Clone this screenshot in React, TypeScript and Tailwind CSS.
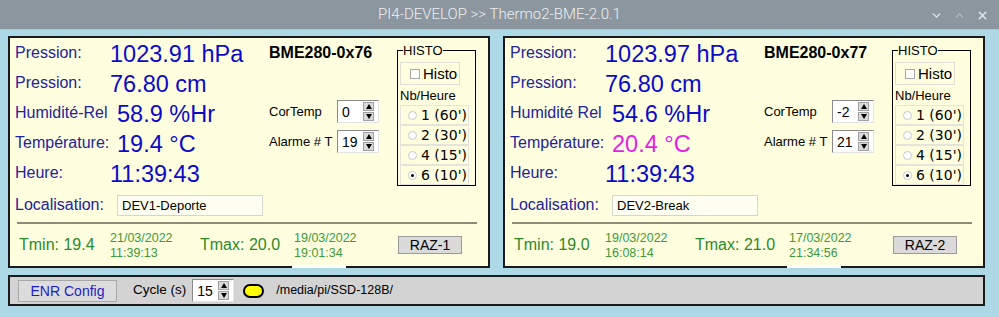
import { ChevronDown, ChevronUp, X } from "lucide-react"

type Sensor = {
  name: string
  press: string
  cm: string
  humLabel: string
  hum: string
  temp: string
  tempHot: boolean
  heure: string
  loc: string
  corTemp: string
  alarme: string
  tmin: string
  tminDate: [string, string]
  tmax: string
  tmaxDate: [string, string]
  raz: string
}

const sensors: Sensor[] = [
  {
    name: "BME280-0x76",
    press: "1023.91 hPa",
    cm: "76.80 cm",
    humLabel: "Humidité-Rel",
    hum: "58.9 %Hr",
    temp: "19.4 °C",
    tempHot: false,
    heure: "11:39:43",
    loc: "DEV1-Deporte",
    corTemp: "0",
    alarme: "19",
    tmin: "19.4",
    tminDate: ["21/03/2022", "11:39:13"],
    tmax: "20.0",
    tmaxDate: ["19/03/2022", "19:01:34"],
    raz: "RAZ-1",
  },
  {
    name: "BME280-0x77",
    press: "1023.97 hPa",
    cm: "76.80 cm",
    humLabel: "Humidité Rel",
    hum: "54.6 %Hr",
    temp: "20.4 °C",
    tempHot: true,
    heure: "11:39:43",
    loc: "DEV2-Break",
    corTemp: "-2",
    alarme: "21",
    tmin: "19.0",
    tminDate: ["19/03/2022", "16:08:14"],
    tmax: "21.0",
    tmaxDate: ["17/03/2022", "21:34:56"],
    raz: "RAZ-2",
  },
]

function Spin({ value }: { value: string }) {
  return (
    <div className="flex h-[23px] w-[42px] items-center border border-t-[#8a8a8a] border-l-[#8a8a8a] border-b-[#e4e4e4] border-r-[#e4e4e4] bg-white pl-[4px]">
      <span className="flex-1 text-[14px] leading-none text-black">{value}</span>
      <div className="mr-[4px] flex h-[19px] w-[11px] flex-col gap-px">
        <div className="flex flex-1 items-center justify-center border border-[#a0a0a0] bg-[#d9d9d9]">
          <div className="h-0 w-0 border-x-[3.5px] border-b-[5px] border-x-transparent border-b-black" />
        </div>
        <div className="flex flex-1 items-center justify-center border border-[#a0a0a0] bg-[#d9d9d9]">
          <div className="h-0 w-0 border-x-[3.5px] border-t-[5px] border-x-transparent border-t-black" />
        </div>
      </div>
    </div>
  )
}

function Row({ label, wide, value, color }: { label: string; wide?: boolean; value: string; color?: string }) {
  return (
    <div className="flex h-[30px] items-center whitespace-nowrap">
      <span className={`${wide ? "w-[102px]" : "w-[95px]"} text-[16px] text-[#22229a]`}>{label}</span>
      <span className={`pt-[3px] text-[23.5px] leading-none ${color ?? "text-[#0a0ac8]"}`}>{value}</span>
    </div>
  )
}

function Panel({ s }: { s: Sensor }) {
  return (
    <div className="relative h-[232px] w-[482px] border-2 border-[#1a1a1a] bg-[#ffffe0]">
      <div className="flex h-[150px]">
        <div className="w-[259px] pl-[5px]">
          <Row label="Pression:" value={s.press} />
          <Row label="Pression:" value={s.cm} />
          <Row label={s.humLabel} wide value={s.hum} />
          <Row label="Température:" wide value={s.temp} color={s.tempHot ? "text-[#e41ee4]" : undefined} />
          <Row label="Heure:" value={s.heure} />
        </div>
        <div className="w-[128px]">
          <div className="flex h-[30px] items-center text-[16px] font-bold text-black">{s.name}</div>
          <div className="mt-[32px] flex items-center">
            <span className="w-[68px] text-[13px] text-black">CorTemp</span>
            <Spin value={s.corTemp} />
          </div>
          <div className="mt-[7px] flex items-center">
            <span className="w-[68px] whitespace-nowrap text-[13px] text-black">Alarme # T</span>
            <Spin value={s.alarme} />
          </div>
        </div>
        <fieldset className="mt-[6px] h-[142px] w-[79px] border border-black pl-[2px]">
          <legend className="ml-[3px] text-[13px] leading-none text-black">HISTO</legend>
          <div className="mt-[5px] flex h-[23px] w-[60px] items-center border border-[#deded6] pl-[9px]">
            <div className="h-[10px] w-[10px] border border-[#a8a8a8] bg-white" />
            <span className="ml-[3px] text-[15px] leading-none text-black">Histo</span>
          </div>
          <div className="mt-[2px] h-[17px] text-[13px] leading-[17px] text-black">Nb/Heure</div>
          <div className="mt-[1px] w-[69px]">
            {["1 (60')", "2 (30')", "4 (15')", "6 (10')"].map((t, i) => (
              <div key={t} className="flex h-[20px] items-center border border-[#e4e4da] pl-[7px]">
                <div className="flex h-[9px] w-[9px] items-center justify-center rounded-full border border-[#c8c8c8] bg-white">
                  {i === 3 && <div className="h-[3px] w-[3px] rounded-full bg-black" />}
                </div>
                <span className="ml-[4px] font-['DejaVu_Sans'] text-[14px] leading-none text-black">{t}</span>
              </div>
            ))}
          </div>
        </fieldset>
      </div>
      <div className="mt-[2px] flex h-[30px] items-center pl-[5px]">
        <span className="w-[102px] text-[16px] text-[#22229a]">Localisation:</span>
        <div className="mt-[1px] flex h-[21px] w-[146px] items-center border border-[#d6d6cc] bg-[#fffff2] pl-[4px] text-[13px] text-black">
          {s.loc}
        </div>
      </div>
      <div className="ml-[7px] mt-[2px] h-[2px] w-[460px] bg-[#8e8a78]" />
      <div className="flex h-[37px] items-center pl-[9px] pt-[4px] text-[#2a8a2a]">
        <span className="w-[91px] text-[16px]">Tmin: {s.tmin}</span>
        <div className="mt-[3px] w-[90px] text-[12.5px] leading-[15px] text-[#3a993a]">
          <div>{s.tminDate[0]}</div>
          <div>{s.tminDate[1]}</div>
        </div>
        <span className="w-[94px] text-[16px]">Tmax: {s.tmax}</span>
        <div className="mt-[3px] w-[104px] text-[12.5px] leading-[15px] text-[#3a993a]">
          <div>{s.tmaxDate[0]}</div>
          <div>{s.tmaxDate[1]}</div>
        </div>
        <button className="h-[18px] w-[64px] border border-[#9a9a9a] bg-[#dadada] text-[14px] leading-none text-black">
          {s.raz}
        </button>
      </div>
      <div className="absolute bottom-[-2px] left-[282px] h-[3px] w-[54px] bg-white" />
    </div>
  )
}

export default function App() {
  return (
    <div className="h-[317px] w-[999px] overflow-hidden bg-[#add8e6] font-['Liberation_Sans',Arial,sans-serif]">
      <div className="relative flex h-[30px] items-center justify-center border-b border-[#b6c6ce] bg-[#8b969e]">
        <span className="font-['Roboto',sans-serif] text-[15px] font-light text-[#eef0f2]">
          PI4-DEVELOP &gt;&gt; Thermo2-BME-2.0.1
        </span>
        <div className="absolute right-[10px] top-0 flex h-[30px] items-center gap-[10px] text-[#e4e8ec]">
          <ChevronDown size={13} strokeWidth={2.5} />
          <ChevronUp size={13} strokeWidth={2.5} className="text-[#b4bcc2]" />
          <X size={13} strokeWidth={2.5} />
        </div>
      </div>
      <div className="px-[8px] pt-[6px]">
        <div className="flex gap-[13px]">
          {sensors.map((s) => (
            <Panel key={s.name} s={s} />
          ))}
        </div>
        <div className="mt-[7px] flex h-[31px] w-[977px] items-center border-2 border-[#1a1a1a] bg-[#d3d3d3] pl-[8px]">
          <button className="h-[22px] w-[99px] border border-[#a8a8a8] bg-[#dcdcdc] text-[14px] text-[#1c1cc8]">
            ENR Config
          </button>
          <span className="ml-[16px] text-[13.5px] text-black">Cycle (s)</span>
          <div className="ml-[6px]">
            <Spin value="15" />
          </div>
          <div className="ml-[9px] h-[14px] w-[21px] rounded-full border-2 border-black bg-[#ffff00]" />
          <span className="ml-[12px] text-[12.5px] text-black">/media/pi/SSD-128B/</span>
        </div>
      </div>
    </div>
  )
}
